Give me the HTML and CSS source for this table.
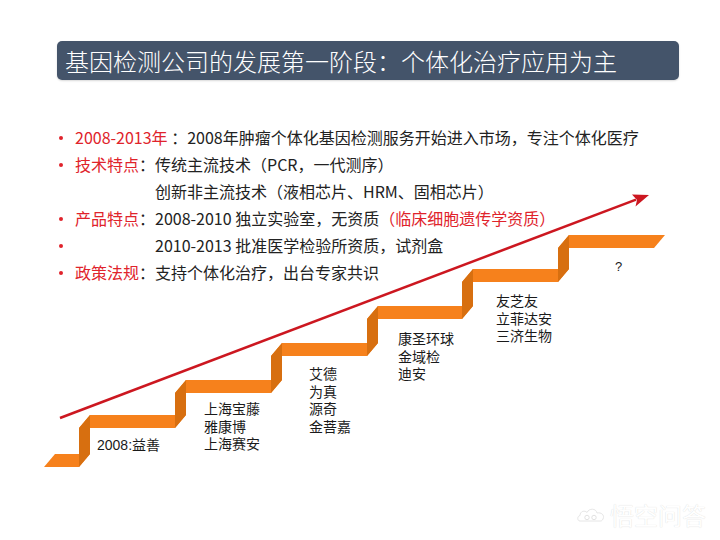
FILE: index.html
```html
<!DOCTYPE html>
<html lang="zh-CN">
<head>
<meta charset="utf-8">
<title>基因检测公司的发展第一阶段</title>
<link rel="stylesheet" href="styles.css">
</head>
<body>
<div class="slide">
  <header class="title-bar">
    <h1>基因检测公司的发展第一阶段：个体化治疗应用为主</h1>
  </header>

  <ul class="points">
    <li><span class="dot"></span><span class="txt"><em>2008-2013年</em> ：2008年肿瘤个体化基因检测服务开始进入市场，专注个体化医疗</span></li>
    <li><span class="dot"></span><span class="txt"><em>技术特点</em>：传统主流技术（PCR，一代测序）</span></li>
    <li><span class="nodot"></span><span class="txt indent">创新非主流技术（液相芯片、HRM、固相芯片）</span></li>
    <li><span class="dot"></span><span class="txt"><em>产品特点</em>：2008-2010 独立实验室，无资质<em>（临床细胞遗传学资质）</em></span></li>
    <li><span class="dot"></span><span class="txt indent">2010-2013 批准医学检验所资质，试剂盒</span></li>
    <li><span class="dot"></span><span class="txt"><em>政策法规</em>：支持个体化治疗，出台专家共识</span></li>
  </ul>

  <div class="diagram">
    <svg class="stairs" width="720" height="540" viewBox="0 0 720 540" aria-hidden="true">
      <g class="face">
        <polygon points="44,467 55,454 90,454 79,467"/>
        <polygon points="79,428 90,415 186,415 175,428"/>
        <polygon points="175,393 186,380 282,380 271,393"/>
        <polygon points="271,356 282,343 378,343 367,356"/>
        <polygon points="367,319 378,306 473,306 462,319"/>
        <polygon points="462,282 473,269 569,269 558,282"/>
        <polygon points="558,248 569,235 665,235 654,248"/>
      </g>
      <g class="riser">
        <polygon points="79,428 90,415 90,454 79,467"/>
        <polygon points="175,393 186,380 186,415 175,428"/>
        <polygon points="271,356 282,343 282,380 271,393"/>
        <polygon points="367,319 378,306 378,343 367,356"/>
        <polygon points="462,282 473,269 473,306 462,319"/>
        <polygon points="558,248 569,235 569,269 558,282"/>
      </g>
      <line class="arrow-line" x1="60" y1="418" x2="636" y2="199.6"/>
      <polygon class="arrow-head" points="649,195 632,194.5 637,200 635.5,206.5"/>
    </svg>

    <div class="label l1">2008:益善</div>
    <div class="label l2">上海宝藤<br>雅康博<br>上海赛安</div>
    <div class="label l3">艾德<br>为真<br>源奇<br>金菩嘉</div>
    <div class="label l4">康圣环球<br>金域检<br>迪安</div>
    <div class="label l5">友芝友<br>立菲达安<br>三济生物</div>
    <div class="label l6">?</div>
  </div>

  <div class="watermark">
    <svg class="wm-logo" width="30" height="18" viewBox="0 0 30 18" aria-hidden="true">
      <path d="M4 15 C1 15 1 10 4 9.5 C4 5 9 4 11 6.5 C13 2 20 2 21 7 C25 6 29 9 27 13 C26 15 25 15 24 15 Z" fill="#fff" stroke="#e6e6e6" stroke-width="1"/>
      <circle cx="11" cy="11.5" r="2.2" fill="none" stroke="#e2e2e2" stroke-width="1"/>
      <circle cx="18" cy="11.5" r="2.2" fill="none" stroke="#e2e2e2" stroke-width="1"/>
    </svg>
    <span class="wm-text">悟空问答</span>
  </div>
</div>
</body>
</html>
```

FILE: styles.css
```css
html, body {
  margin: 0;
  padding: 0;
  background: #ffffff;
}

.slide {
  position: relative;
  width: 720px;
  height: 540px;
  overflow: hidden;
  background: #ffffff;
  font-family: "Noto Sans CJK SC", "Noto Sans", "Liberation Sans", sans-serif;
  color: #222222;
}

.title-bar {
  margin: 41px 0 0 57px;
  width: 622px;
  height: 39px;
  background: #44546a;
  border-radius: 5px;
  box-shadow: 0 1px 2px rgba(0, 0, 0, 0.15);
}

.title-bar h1 {
  margin: 0;
  padding-left: 8px;
  font-size: 24px;
  line-height: 39px;
  font-weight: 300;
  color: #ffffff;
  white-space: nowrap;
}

.points {
  list-style: none;
  margin: 44px 0 0 0;
  padding: 0 0 0 58px;
  font-size: 16px;
  line-height: 27px;
}

.points li {
  display: flex;
  align-items: center;
  white-space: nowrap;
}

.dot, .nodot {
  flex: 0 0 17px;
  display: flex;
  align-items: center;
}

.dot::before {
  content: "";
  width: 4px;
  height: 4px;
  margin-left: 1px;
  border-radius: 50%;
  background: #e0232b;
}

.txt em {
  font-style: normal;
  color: #e0232b;
}

.txt.indent {
  padding-left: 80px;
}

.diagram {
  position: absolute;
  left: 0;
  top: 0;
  width: 720px;
  height: 540px;
  pointer-events: none;
}

.stairs {
  position: absolute;
  left: 0;
  top: 0;
}

.face polygon {
  fill: #f6811c;
}

.riser polygon {
  fill: #d76f10;
}

.arrow-line {
  stroke: #cc1720;
  stroke-width: 2.5;
}

.arrow-head {
  fill: #cc1720;
}

.label {
  position: absolute;
  font-family: "Liberation Sans", "Noto Sans CJK SC", sans-serif;
  font-size: 14px;
  line-height: 17.5px;
  color: #1a1a1a;
  white-space: nowrap;
}

.l1 { left: 97px;  top: 437px; }
.l2 { left: 204px; top: 401px; }
.l3 { left: 309px; top: 366px; }
.l4 { left: 398px; top: 331px; }
.l5 { left: 496px; top: 293px; }
.l6 { left: 615px; top: 258px; font-size: 13px; }

.watermark {
  position: absolute;
  right: 14px;
  bottom: 12px;
  display: flex;
  align-items: center;
  gap: 4px;
}

.wm-text {
  font-size: 24px;
  line-height: 26px;
  color: #ffffff;
  text-shadow: 0 0 1px rgba(0, 0, 0, 0.18);
}
```
